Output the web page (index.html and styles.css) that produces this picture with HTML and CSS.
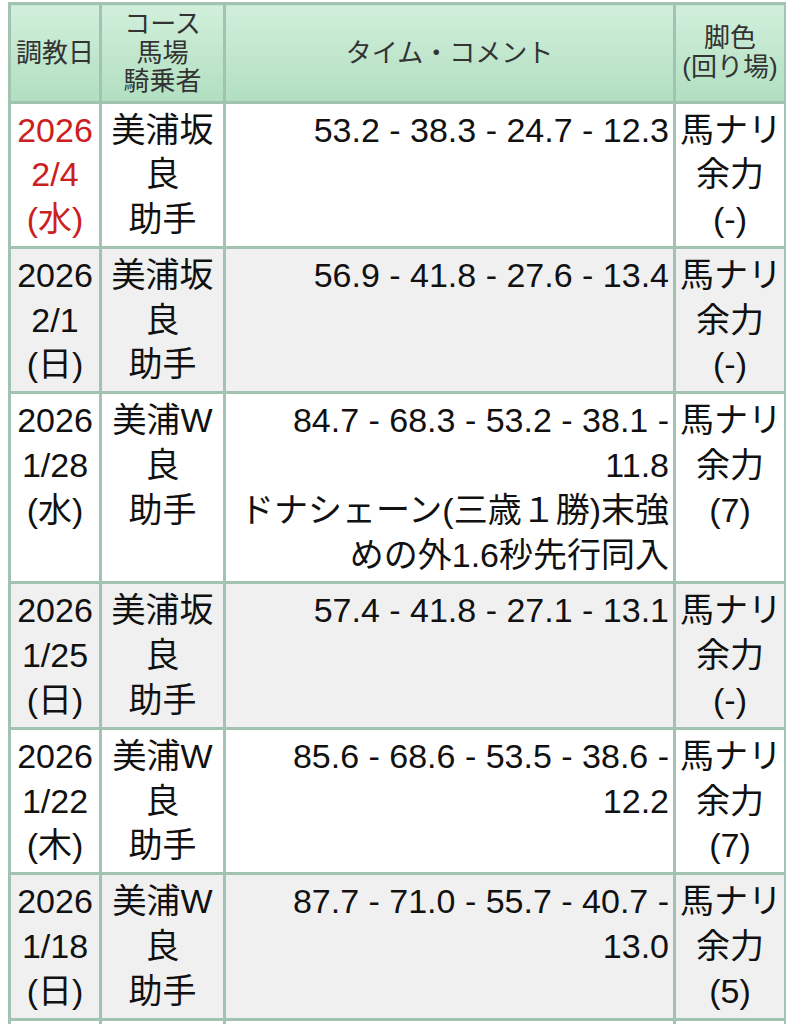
FILE: index.html
```html
<!DOCTYPE html>
<html lang="ja">
<head>
<meta charset="utf-8">
<title>調教</title>
<link rel="stylesheet" href="styles.css">
</head>
<body>
<table class="oikiri">
  <colgroup>
    <col class="c-date">
    <col class="c-course">
    <col class="c-time">
    <col class="c-leg">
  </colgroup>
  <thead>
    <tr>
      <th>調教日</th>
      <th>コース<br>馬場<br>騎乗者</th>
      <th>タイム・コメント</th>
      <th>脚色<br>(回り場)</th>
    </tr>
  </thead>
  <tbody>
    <tr>
      <td class="date latest">2026<br>2/4<br>(水)</td>
      <td class="course">美浦坂<br>良<br>助手</td>
      <td class="time">53.2 - 38.3 - 24.7 - 12.3</td>
      <td class="leg">馬ナリ<br>余力<br>(-)</td>
    </tr>
    <tr class="alt">
      <td class="date">2026<br>2/1<br>(日)</td>
      <td class="course">美浦坂<br>良<br>助手</td>
      <td class="time">56.9 - 41.8 - 27.6 - 13.4</td>
      <td class="leg">馬ナリ<br>余力<br>(-)</td>
    </tr>
    <tr>
      <td class="date">2026<br>1/28<br>(水)</td>
      <td class="course">美浦W<br>良<br>助手</td>
      <td class="time">84.7 - 68.3 - 53.2 - 38.1 - 11.8<br><span class="comment">ドナシェーン(三歳１勝)末強めの外1.6秒先行同入</span></td>
      <td class="leg">馬ナリ<br>余力<br>(7)</td>
    </tr>
    <tr class="alt">
      <td class="date">2026<br>1/25<br>(日)</td>
      <td class="course">美浦坂<br>良<br>助手</td>
      <td class="time">57.4 - 41.8 - 27.1 - 13.1</td>
      <td class="leg">馬ナリ<br>余力<br>(-)</td>
    </tr>
    <tr>
      <td class="date">2026<br>1/22<br>(木)</td>
      <td class="course">美浦W<br>良<br>助手</td>
      <td class="time">85.6 - 68.6 - 53.5 - 38.6 - 12.2</td>
      <td class="leg">馬ナリ<br>余力<br>(7)</td>
    </tr>
    <tr class="alt">
      <td class="date">2026<br>1/18<br>(日)</td>
      <td class="course">美浦W<br>良<br>助手</td>
      <td class="time">87.7 - 71.0 - 55.7 - 40.7 - 13.0</td>
      <td class="leg">馬ナリ<br>余力<br>(5)</td>
    </tr>
    <tr>
      <td class="date">2026<br>1/15<br>(木)</td>
      <td class="course">美浦坂<br>良<br>助手</td>
      <td class="time">58.1 - 42.3 - 27.5 - 13.2</td>
      <td class="leg">馬ナリ<br>余力<br>(-)</td>
    </tr>
  </tbody>
</table>
</body>
</html>
```
FILE: styles.css
```css
html, body {
  background: #ffffff;
}

body {
  margin: 2px 8px 8px 8px;
  font-family: "Liberation Sans", "Noto Sans CJK JP", sans-serif;
  color: #111111;
}

.oikiri {
  width: 100%;
  border-collapse: collapse;
  table-layout: fixed;
  border: 3px solid #a2c3b2;
}

.c-date { width: 91px; }
.c-course { width: 124px; }
.c-time { width: 450px; }
.c-leg { width: 111px; }

.oikiri th {
  background: linear-gradient(to bottom, #d1efdb, #b1dfc0);
  border: 3px solid #a2c3b2;
  font-weight: normal;
  font-size: 26px;
  line-height: 28.5px;
  color: #333333;
  padding: 5px 1px;
  vertical-align: middle;
  text-align: center;
  white-space: nowrap;
}

.oikiri td {
  border: 3px solid #a2c3b2;
  font-size: 34px;
  line-height: 44.8px;
  padding: 4px 4px;
  vertical-align: top;
  background: #ffffff;
}

.oikiri tr.alt td {
  background: #f0f0f0;
}

.date,
.course,
.leg {
  text-align: center;
  white-space: nowrap;
}

.leg {
  padding-left: 3px;
  padding-right: 3px;
}

.time {
  text-align: right;
}

.latest {
  color: #cc2020;
}
```
